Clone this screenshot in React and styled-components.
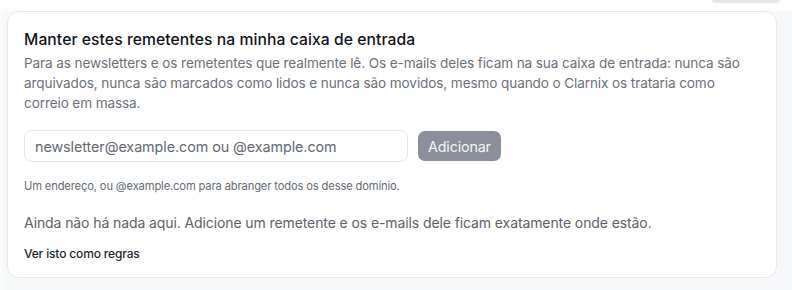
import React from 'react'
import styled, { createGlobalStyle } from 'styled-components'

const GlobalStyle = createGlobalStyle`
    html, body {
        margin: 0;
        padding: 0;
        background: #f7f9fa;
        font-family: 'Inter', 'Liberation Sans', sans-serif;
    }
`

const TopStrip = styled.div`
    height: 11px;
    background: #fdfdfe;
    border-bottom: 1px solid #e8eaee;
    display: flex;
    justify-content: flex-end;
`

const GhostButton = styled.div`
    width: 68px;
    height: 3px;
    margin-right: 12px;
    background: #e5e7ee;
    border-radius: 0 0 4px 4px;
`

const Page = styled.div`
    padding: 0 15px 12px 7px;
    background: linear-gradient(to right, #fcfdfd, #f6f8f9 6px);
`

const Card = styled.section`
    margin-top: -1px;
    background: #fff;
    border: 1px solid #e5e7eb;
    border-radius: 12px;
    padding: 18px 16px 15px 16px;
    min-height: 232px;
    box-sizing: border-box;
`

const Title = styled.h2`
    margin: 0;
    font-size: 15.7px;
    font-weight: 500;
    color: #111318;
    line-height: 20px;
    letter-spacing: 0.07px;
`

const Description = styled.p`
    margin: 3px 0 0;
    font-size: 13.6px;
    line-height: 20px;
    color: #6b7079;
    letter-spacing: -0.12px;
`

const AddRow = styled.div`
    display: flex;
    align-items: center;
    gap: 10px;
    margin-top: 17px;
`

const EmailInput = styled.input`
    width: 384px;
    height: 32px;
    box-sizing: border-box;
    border: 1px solid #e3e5e9;
    border-radius: 8px;
    padding: 0 10px;
    font-family: inherit;
    font-size: 14.3px;
    letter-spacing: -0.05px;
    color: #2b2f36;
    outline: none;

    &::placeholder {
        color: #626770;
    }
`

const AddButton = styled.button`
    height: 30px;
    padding: 0 10px;
    border: none;
    border-radius: 7px;
    background: #8a8f9b;
    color: #f3f4f6;
    font-family: inherit;
    font-size: 14.3px;
    letter-spacing: -0.15px;
`

const Hint = styled.p`
    margin: 16px 0 0;
    font-size: 11.2px;
    line-height: 16px;
    color: #646a73;
    letter-spacing: -0.15px;
`

const Empty = styled.p`
    margin: 19px 0 0;
    font-size: 14px;
    line-height: 20px;
    color: #5b6069;
    letter-spacing: -0.1px;
`

const RulesLink = styled.a`
    display: inline-block;
    margin-top: 13px;
    font-size: 12px;
    font-weight: 500;
    color: #1c1f2e;
    letter-spacing: -0.15px;
    text-decoration: none;
    cursor: pointer;
`

const App = () => {
    return (
        <>
            <GlobalStyle />
            <TopStrip>
                <GhostButton />
            </TopStrip>
            <Page>
                <Card>
                    <Title>Manter estes remetentes na minha caixa de entrada</Title>
                    <Description>
                        Para as newsletters e os remetentes que realmente lê. Os e-mails deles ficam na sua caixa de
                        entrada: nunca são
                        <br />
                        arquivados, nunca são marcados como lidos e nunca são movidos, mesmo quando o Clarnix os
                        trataria como
                        <br />
                        correio em massa.
                    </Description>
                    <AddRow>
                        <EmailInput placeholder='newsletter@example.com ou @example.com' />
                        <AddButton>Adicionar</AddButton>
                    </AddRow>
                    <Hint>Um endereço, ou @example.com para abranger todos os desse domínio.</Hint>
                    <Empty>
                        Ainda não há nada aqui. Adicione um remetente e os e-mails dele ficam exatamente onde estão.
                    </Empty>
                    <RulesLink>Ver isto como regras</RulesLink>
                </Card>
            </Page>
        </>
    )
}

export default App
